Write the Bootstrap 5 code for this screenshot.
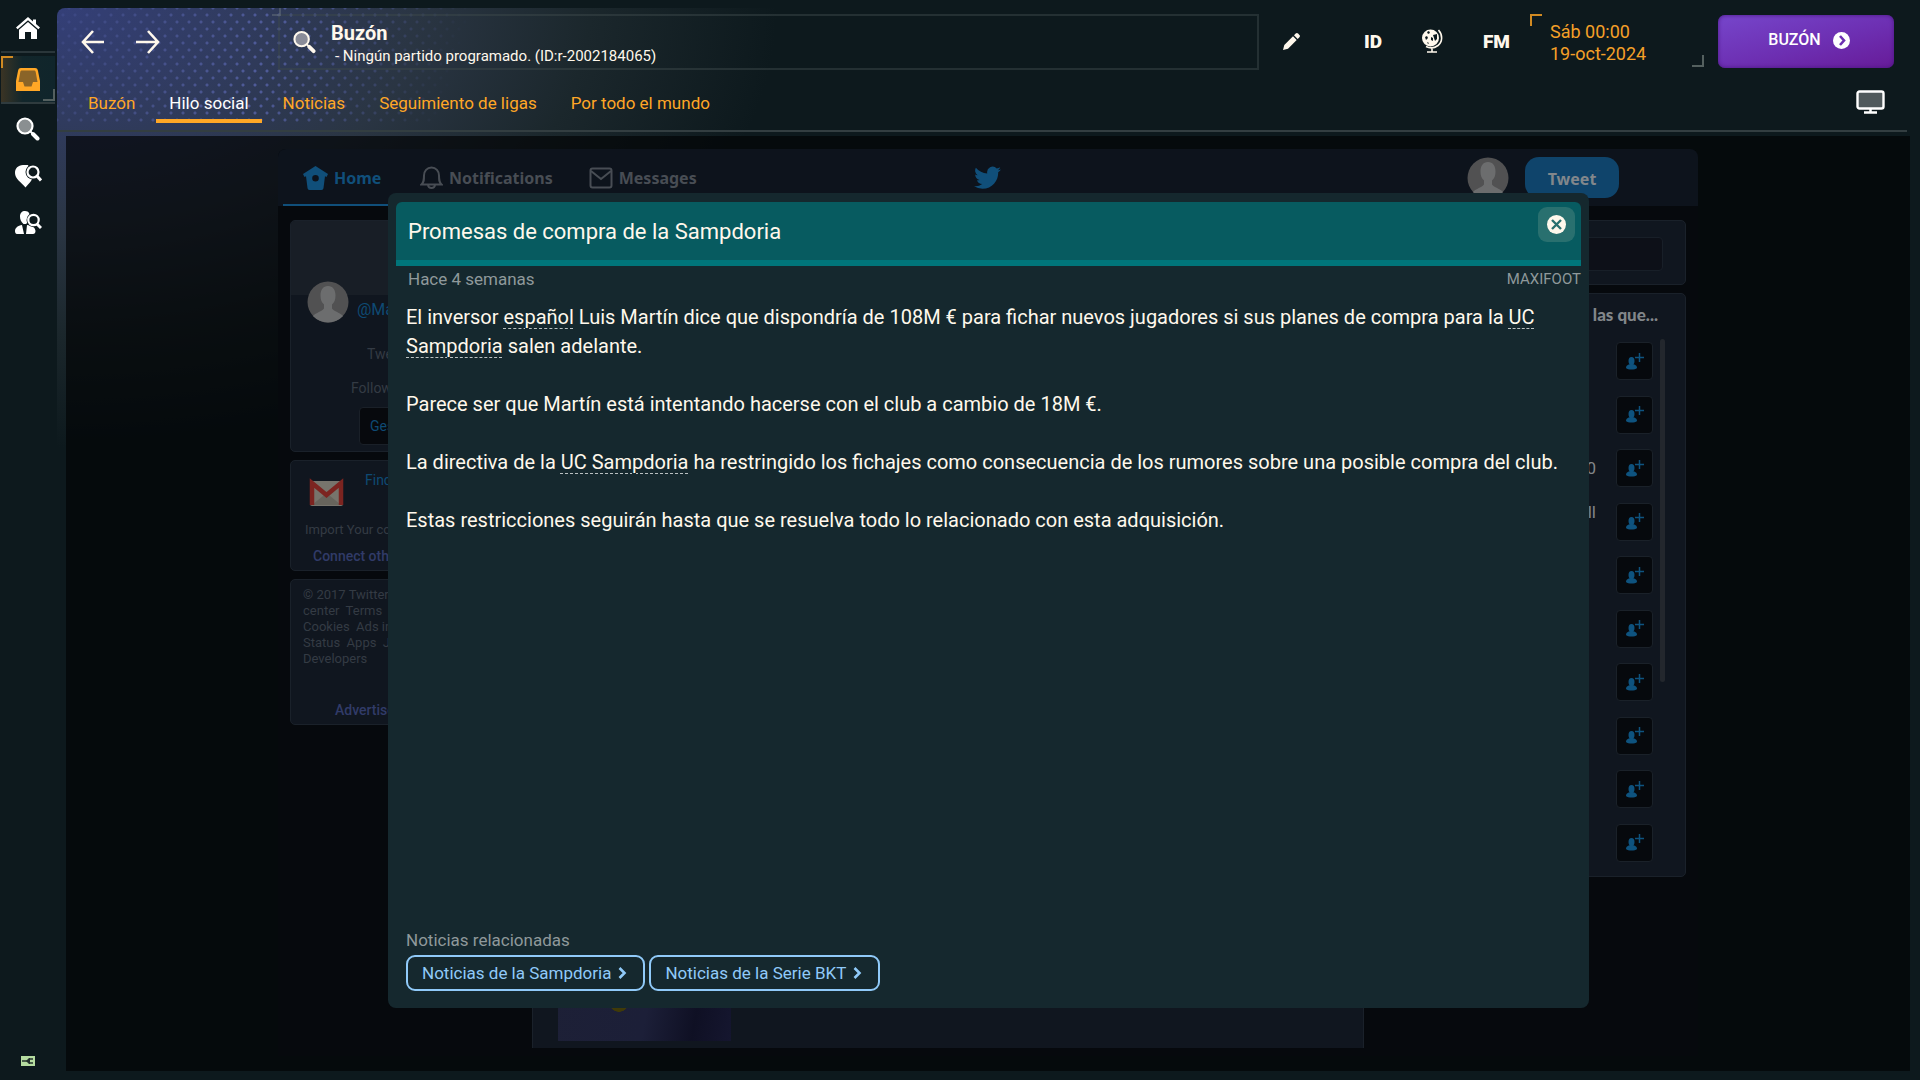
<!DOCTYPE html>
<html lang="es">
<head>
<meta charset="utf-8">
<meta name="viewport" content="width=device-width, initial-scale=1">
<title>Buzón</title>
<link href="https://cdn.jsdelivr.net/npm/bootstrap@5.3.0/dist/css/bootstrap.min.css" rel="stylesheet">
<style>
  body { background: #0d191d; color: #fff8ec; font-family: Roboto, "Liberation Sans", sans-serif; font-size: 18px; line-height: 22px; }
  a { text-decoration: none; }
  svg { display: block; flex: none; }

  /* icon rail */
  .rail { width: 57px; flex: none; padding: 5px 2px 13px 1px; }
  .rail a { display: flex; align-items: center; justify-content: center; height: 47px; width: 100%; color: #fff; }
  .rail .rail-home { border-bottom: 2px solid #2a363a; height: 48px; }
  .rail .rail-on { position: relative; margin: 3px 0 1px; height: 48px; color: #ffa726; border-bottom: 2px solid #2f3b3e; background: linear-gradient(90deg, #3b3424, #12262b 40%, #10252b); }
  .bracket::before, .bracket::after { content: ""; position: absolute; width: 12px; height: 12px; }
  .bracket::before { left: 0; top: 0; border-left: 2px solid #d18a22; border-top: 2px solid #d18a22; }
  .bracket::after { right: 0; bottom: 1px; border-right: 2px solid #54605f; border-bottom: 2px solid #54605f; }

  /* frame */
  .stage { margin-top: 8px; border-top-left-radius: 8px; position: relative; min-width: 0;
    background: radial-gradient(ellipse 720px 440px at 0 0, #343f78 0, #303b5e 26%, #2a3543 50%, #1b272c 74%, rgba(13,25,29,0) 100%); }
  .stage::before { content: ""; position: absolute; left: 0; top: 0; width: 460px; height: 116px; border-top-left-radius: 8px;
    background-image: radial-gradient(circle, #5b67b0 1px, transparent 2px), radial-gradient(circle, #5b67b0 1px, transparent 2px);
    background-size: 12px 14px; background-position: 0 0, 6px 7px; opacity: .75;
    -webkit-mask-image: linear-gradient(105deg, rgba(0,0,0,.25), #000 45%, transparent 85%); mask-image: linear-gradient(105deg, rgba(0,0,0,.25), #000 45%, transparent 85%); }
  .topbar { position: relative; height: 124px; border-bottom: 2px solid #333e41; margin-right: 13px; padding-top: 6px; }
  .icon-btn { background: none; border: 0; padding: 0; color: #fff8ec; display: flex; align-items: center; justify-content: center; }
  .where { position: relative; height: 56px; margin-left: 118px; border: 2px solid #3c474a80; padding: 4px 12px 0; gap: 15px; flex: 0 1 981px; }
  .where svg { margin: 0 0 4px 1px; }
  .where::before { content: ""; position: absolute; left: -8px; top: -8px; width: 9px; height: 8px; border: 1px solid #68727c80; border-width: 0 2px 2px 0; }
  .where-title { font-size: 20px; font-weight: 700; line-height: 24px; }
  .where-sub { font-size: 15px; line-height: 22px; padding-left: 4px; }
  .tools { margin-right: 13px; }
  .short { font-weight: 900; font-size: 19px; padding-top: 2px; }
  .clock { position: relative; width: 174px; height: 54px; color: #f5a028; padding: 7px 20px 0; }
  .go { width: 176px; height: 53px; margin-left: 14px; padding: 0 0 2px 6px; border: 0; border-radius: 7px; color: #fff; font-size: 16px; font-weight: 500; background: linear-gradient(165deg, #7646cb, #6d2fb2 55%, #671b98); box-shadow: inset 0 0 4px #4a1580; }
  .tabs-row { padding: 20px 22px 0 18px; }
  .tabs-row a { color: #ffa726; padding: 2px 13px 0; height: 33px; font-size: 17px; border-bottom: 4px solid transparent; white-space: nowrap; }
  .tabs-row a.on { color: #fff; border-color: #ffa726; }
  .tabs-row button { height: 24px; }

  /* dimmed social page */
  .scene { position: relative; margin: 4px 10px 9px 9px; background: rgba(1,3,4,.68); }
  .feed { width: 1420px; max-width: 100%; margin-top: 13px; margin-bottom: 15px; background: #06090d; border-radius: 8px 8px 0 0; }
  .feed-nav { height: 57px; background: #0d131c; border-radius: 8px 8px 0 0; padding: 0 79px 0 5px; font-family: "Noto Sans", sans-serif; font-weight: 700; font-size: 16px; }
  .feed-nav a { color: #484d54; display: flex; align-items: center; gap: 6px; height: 57px; }
  .feed-nav a.on { color: #104f7a; width: 117px; padding-left: 20px; border-bottom: 2px solid #104f7a; padding-top: 2px; }
  .bird { position: absolute; left: 50%; top: 17px; margin-left: -14px; }
  .tweet { width: 94px; height: 41px; border: 0; border-radius: 14px; background: #0f446b; color: #82878b; font-weight: 700; font-size: 16px; padding: 2px 0 0; }
  .cols { padding: 14px 12px 0; }
  .panel { background: #10161f; border: 1px solid #1a212a; border-radius: 5px; overflow: hidden; color: #343b44; font-size: 14px; }
  .side-l { width: 230px; flex: none; }
  .side-r { width: 310px; flex: none; }
  .profile { height: 232px; }
  .cover { height: 74px; background: #181e26; }
  .face-up { margin-top: -14px; }
  .blue { color: #0e4a73; }
  .violet { color: #313b68; }
  .manage { width: 130px; height: 38px; border: 1px solid #1a2028; border-radius: 4px; background: #07090d; color: #0e4a73; padding: 0 10px; text-align: left; }
  .import { height: 111px; padding: 8px 14px; }
  .import-note { font-size: 13px; padding-top: 8px; }
  .legal-box { height: 146px; padding: 7px 8px; }
  .legal { font-size: 13px; line-height: 16px; white-space: pre; }
  .mid { border-width: 0 1px; border-radius: 0; padding: 0 25px 7px; margin-bottom: 8px; }
  .thumb { width: 173px; height: 150px; background: radial-gradient(circle 10px at 61px 111px, #403a08 95%, transparent), linear-gradient(100deg, #1d2036, #1c1f38 55%, #0f1024 80%, #15162f); }
  .find-panel { height: 65px; }
  .find-box { width: 270px; height: 34px; background: #0d1018; border: 1px solid #181f28; border-radius: 4px; }
  .who { height: 584px; }
  .who h2 { font-family: Lato, sans-serif; font-weight: 900; font-size: 17px; line-height: 20px; color: #82868a; padding: 11px 11px 14px 0; margin: 0; }
  .who-row { gap: 7px; }
  .follow-list { height: 520px; margin-top: 3px; color: #82868a; font-size: 17px; line-height: 19px; }
  .team { padding-right: 20px; }
  .follow { width: 37px; height: 38px; flex: none; border: 1px solid #1a2129; border-radius: 4px; background: #06090d; color: #0e537f; display: flex; align-items: center; justify-content: center; padding: 0; }
  .thumbbar { width: 5px; height: 343px; border-radius: 3px; background: #23272d; }

  /* news dialog */
  .news { position: absolute; top: 57px; left: 50%; margin-left: -600px; width: 1201px; height: 815px; background: #15282e; border-radius: 8px; padding: 9px 8px 17px; }
  .news-head { height: 64px; background: #075b60; border-bottom: 6px solid #00757a; border-radius: 6px 6px 0 0; padding: 5px 6px 0 12px; }
  .news-head h1 { font-size: 22px; line-height: 50px; font-weight: 400; margin: 0; color: #fff8ec; }
  .close-x { width: 37px; height: 35px; border: 0; border-radius: 9px; background: #29706f; padding: 0; color: #fff8ec; display: flex; align-items: center; justify-content: center; }
  .dim { color: #8f999b; font-size: 17px; }
  .stamp { padding: 2px 0 0 12px; }
  .source { font-size: 15px; }
  .story { font-size: 20px; line-height: 29px; padding: 13px 16px 0 10px; }
  .story p { margin: 0 0 29px; }
  .story a { color: inherit; text-decoration: underline dashed 1px #b9c0c1; text-underline-offset: 4px; }
  .related { padding-left: 10px; }
  .more { height: 36px; border: 2px solid #90caf9; border-radius: 9px; color: #90caf9; font-size: 17px; background: transparent; padding: 0 16px 0 14px; gap: 7px; display: flex; align-items: center; white-space: nowrap; }
</style>
</head>
<body>
<div class="d-flex min-vh-100">
  <nav class="rail d-flex flex-column" aria-label="Principal">
    <a class="rail-home" href="#" aria-label="Inicio"><svg width="24" height="22" viewBox="0 0 24 22" fill="currentColor"><path d="M12 0 0 10.500l1.600 1.700L12 3.200l10.400 9L24 10.500l-4-3.500V2.500h-3v2z"/><path d="M12 5 3 12.800V22h6v-7h6v7h6v-9.200z"/></svg></a>
    <a class="rail-on bracket" href="#" aria-label="Buzón"><svg width="24" height="23" viewBox="0 0 24 23"><path fill="#ffa726" d="M5 0h14c2 0 2.600 1 3 3l2 10v10H0V13L2 3c.4-2 1-3 3-3z"/><path fill="#8a6428" d="M6 2.500h12c1 0 1.500.5 1.700 1.500L21.500 14H17l-1.500 4.500h-7L7 14H2.500L4.300 4C4.500 3 5 2.500 6 2.500z"/></svg></a>
    <a href="#" aria-label="Buscar"><svg width="24" height="24" viewBox="0 0 24 24"><circle cx="9" cy="9" r="7.500" fill="#8a8f91" stroke="#fff" stroke-width="2.200"/><path d="m14.500 14.500 2 2" stroke="#fff" stroke-width="2"/><path d="m17 17 4.500 4.500" stroke="#fff" stroke-width="4" stroke-linecap="round"/></svg></a>
    <a href="#" aria-label="Ojeo"><svg width="27" height="24" viewBox="0 0 27 24"><path fill="#fff" d="M8 1C3 1.500 0 4 0 9c0 6 6 9 10.500 14.500C14 19 17.500 17 17.500 12L13 1z"/><circle cx="18" cy="8" r="7.500" fill="#0d191d"/><circle cx="18" cy="8" r="5.500" fill="none" stroke="#fff" stroke-width="2.200"/><path d="m22 12 4 4.500" stroke="#fff" stroke-width="3"/></svg></a>
    <a href="#" aria-label="Personal"><svg width="27" height="24" viewBox="0 0 27 24"><path fill="#fff" d="M10 0c4 0 5 3 4.600 6-.3 3-1.600 5.500-3.600 7H8.500C6 11 5 8 5 5.500 5 2 7 0 10 0zM0 20c0-3 3-5.500 7-6l2 9H2c-1.500 0-2-1.500-2-3zM12 14c5 0 8.500 3 8.500 6 0 2-1 3-2.500 3h-7z"/><circle cx="18.500" cy="9" r="7" fill="#0d191d"/><circle cx="18.500" cy="9" r="5.200" fill="none" stroke="#fff" stroke-width="2.200"/><path d="m22 13 4 4" stroke="#fff" stroke-width="3"/></svg></a>
    <span class="mt-auto d-flex justify-content-center"><svg width="16" height="12" viewBox="0 0 16 12"><path fill="#b5dca0" d="M1 1h14v10H1z"/><path d="M2 6h6M9 4h4M9 8h4" fill="none" stroke="#23302c" stroke-width="1.500"/><path d="M6 6l3-3h1v6H9z" fill="#23302c"/></svg></span>
  </nav>

  <main class="stage flex-grow-1 d-flex flex-column">
    <header class="topbar">
      <div class="d-flex align-items-start">
        <div class="d-flex pt-3 gap-4 ps-4">
          <button class="icon-btn" aria-label="Atrás"><svg width="23" height="24" viewBox="0 0 23 24" fill="none" stroke="currentColor" stroke-width="2.600"><path d="M12 1 2 12l10 11M2 12h21"/></svg></button>
          <button class="icon-btn ms-2" aria-label="Adelante"><svg width="24" height="24" viewBox="0 0 24 24" fill="none" stroke="currentColor" stroke-width="2.600"><path d="m12 1 10 11-10 11M22 12H0"/></svg></button>
        </div>
        <div class="where d-flex align-items-center">
          <svg width="23" height="24" viewBox="0 0 24 24"><circle cx="9" cy="9" r="7.500" fill="#8a8c98" stroke="#fff8ec" stroke-width="2.200"/><path d="m14.500 14.500 2 2" stroke="#fff8ec" stroke-width="2"/><path d="m17 17 4.500 4.500" stroke="#fff8ec" stroke-width="4" stroke-linecap="round"/></svg>
          <div>
            <div class="where-title">Buzón</div>
            <div class="where-sub">- Ningún partido programado. (ID:r-2002184065)</div>
          </div>
        </div>
        <div class="tools d-flex align-items-center ms-auto">
          <button class="icon-btn me-5" aria-label="Editar"><svg class="me-3" width="17" height="17" viewBox="0 0 17 17" fill="currentColor"><path d="M0 17l1.300-5L10 3.300 13.700 7 5 15.700zM11 2.300 12.700.6c.8-.8 1.600-.8 2.400 0l1.300 1.300c.8.8.8 1.600 0 2.400L14.700 6z"/></svg></button>
          <button class="icon-btn short me-4">ID</button>
          <button class="icon-btn ms-3 me-4" aria-label="Mundo"><svg width="21" height="24" viewBox="0 0 21 24"><circle cx="8.500" cy="9" r="8.500" fill="#fff8ec"/><path d="M5 3l2-1 1 2-2 1zM3 8l2-1 1 2-2 2zM9 8l2 1v3l-2-1zM11 6l4-1v5l-2 2-1-3zM5 13l2 1-1 1z" fill="#0d191d"/><path d="M16.500 1c4.500 5 4 12-.5 15.500-3.500 2.500-8 3-12 1M10 19v4M5 23h10" fill="none" stroke="#fff8ec" stroke-width="1.600"/></svg></button>
          <button class="icon-btn short ms-3 me-3 pe-1">FM</button>
          <div class="clock bracket">Sáb 00:00<br>19-oct-2024</div>
          <button class="go d-flex align-items-center justify-content-center gap-2">BUZÓN <svg class="ms-1" width="17" height="17" viewBox="0 0 17 17"><circle cx="8.500" cy="8.500" r="8.500" fill="#fff"/><path d="m7 4 4 4.500L7 13" fill="none" stroke="#6d2fb2" stroke-width="2.600"/></svg></button>
        </div>
      </div>
      <nav class="tabs-row d-flex gap-2" aria-label="Secciones">
        <a href="#">Buzón</a>
        <a class="on" href="#">Hilo social</a>
        <a href="#">Noticias</a>
        <a href="#">Seguimiento de ligas</a>
        <a href="#">Por todo el mundo</a>
        <button class="icon-btn ms-auto" aria-label="Vista"><svg width="29" height="24" viewBox="0 0 29 24"><rect x="1.500" y="1.500" width="26" height="17" rx="2" fill="#50595c" stroke="#fff" stroke-width="2.400"/><path d="M14.500 19v3M8 22.500h13" stroke="#fff" stroke-width="2.500"/></svg></button>
      </nav>
    </header>

    <section class="scene flex-grow-1 d-flex justify-content-center">
      <div class="feed d-flex flex-column">
        <div class="feed-nav position-relative d-flex align-items-center">
          <a class="on" href="#"><svg width="25" height="24" viewBox="0 0 25 24"><path fill="currentColor" fill-rule="evenodd" d="M12.500 0 25 8l-1.500 3-1.500-.7L20.500 22c-.2 1.300-.8 2-2 2H6.500c-1.200 0-1.800-.7-2-2L3 10.300 1.500 11 0 8zm0 9a3.300 3.300 0 1 0 0 6.600 3.300 3.300 0 0 0 0-6.600z"/></svg>Home</a>
          <a class="ms-3 ps-1" href="#"><svg width="23" height="24" viewBox="0 0 23 24" fill="none" stroke="currentColor" stroke-width="2"><path d="M1.500 18.500C4 16 4 14 4 9.500 4 5 7 1.500 11.500 1.500S19 5 19 9.500c0 4.500 0 6.500 2.500 9zM8 19c.5 4 6.500 4 7 0"/></svg>Notifications</a>
          <a class="ms-4 ps-2" href="#"><svg class="ms-1" width="24" height="22" viewBox="0 0 24 22" fill="none" stroke="currentColor" stroke-width="2"><rect x="1.500" y="1.500" width="21" height="19" rx="2"/><path d="m2 4 10 8 10-8"/></svg>Messages</a>
          <svg class="bird" width="27" height="24" viewBox="0 0 24 20" fill="#104f7a"><path d="M24 2.400a9.800 9.800 0 0 1-2.800.8A5 5 0 0 0 23.300.4a10 10 0 0 1-3.100 1.200A4.900 4.900 0 0 0 11.800 6 14 14 0 0 1 1.700.9a4.900 4.900 0 0 0 1.500 6.600A4.900 4.900 0 0 1 1 6.900c0 2.300 1.600 4.400 3.900 4.900a5 5 0 0 1-2.200.1 4.900 4.900 0 0 0 4.600 3.400A9.900 9.900 0 0 1 0 17.300a14 14 0 0 0 7.500 2.200c9.100 0 14.300-7.700 14-14.600A10 10 0 0 0 24 2.400z"/></svg>
          <div class="d-flex ms-auto gap-3 align-items-center">
            <svg width="42" height="42" viewBox="0 0 42 42"><circle cx="21" cy="21" r="20.500" fill="#515152"/><path fill="#6c6d6e" d="M21 5c5 0 7.500 4 7.500 9.500 0 4-1 7-3.500 9v4c2 3 8 4 11 7.500a20.500 20.500 0 0 1-30 0c3-3.500 9-4.500 11-7.500v-4c-2.500-2-3.500-5-3.500-9C13.500 9 16 5 21 5z"/></svg>
            <button class="tweet">Tweet</button>
          </div>
        </div>
        <div class="cols d-flex flex-grow-1 gap-2">
          <div class="side-l d-flex flex-column gap-2 me-1">
            <div class="panel profile">
              <div class="cover"></div>
              <div class="d-flex align-items-start px-3 gap-2">
                <svg class="face-up" width="42" height="42" viewBox="0 0 42 42"><circle cx="21" cy="21" r="20.500" fill="#515152"/><path fill="#6c6d6e" d="M21 5c5 0 7.500 4 7.500 9.500 0 4-1 7-3.500 9v4c2 3 8 4 11 7.500a20.500 20.500 0 0 1-30 0c3-3.500 9-4.500 11-7.500v-4c-2.500-2-3.500-5-3.500-9C13.500 9 16 5 21 5z"/></svg>
                <a class="blue fs-6 pt-1" href="#">@Maxi</a>
              </div>
              <div class="ps-5 pt-3"><div class="ps-4 ms-1 pt-1">Tweets</div></div>
              <div class="ps-5 pt-2"><div class="ps-1 ms-2 pt-1">Following</div></div>
              <div class="ps-5 pt-1 ms-3"><button class="manage ms-1 mt-1">Gestionar</button></div>
            </div>
            <div class="panel import">
              <div class="d-flex gap-3">
                <svg class="mt-2 ms-1 me-1" width="36" height="34" viewBox="0 0 36 30"><rect x="1" y="2" width="33" height="25" rx="2" fill="#77746c"/><path d="M3 26 17.500 14 32 26z" fill="#67645c"/><path d="M3 26V4l14.500 12L32 4v22" fill="none" stroke="#7c2420" stroke-width="4.500"/></svg>
                <a class="blue" href="#">Find</a>
              </div>
              <div class="import-note">Import Your contacts</div>
              <a class="violet ps-2 fw-medium d-block pt-1" href="#">Connect other</a>
            </div>
            <div class="panel legal-box"><div class="legal ps-1">© 2017 Twitter
center  Terms
Cookies  Ads info
Status  Apps  Jobs
Developers</div>
              <div class="pt-4 ps-4 ms-2"><a class="violet ps-1 mt-2 d-inline-block fw-medium" href="#">Advertise</a></div>
            </div>
          </div>
          <div class="panel mid flex-grow-1 d-flex flex-column"><div class="thumb mt-auto"></div></div>
          <div class="side-r ms-1 d-flex flex-column gap-2">
            <div class="panel find-panel pt-3 px-3"><input class="find-box" type="text" aria-label="Buscar en Twitter"></div>
            <div class="panel who px-3">
              <h2 class="text-end">a las que...</h2>
              <div class="who-row d-flex">
                <div class="follow-list flex-grow-1 d-flex flex-column justify-content-between" id="follows"></div>
                <div class="thumbbar me-1"></div>
              </div>
            </div>
          </div>
        </div>
      </div>

      <article class="news d-flex flex-column" role="dialog" aria-labelledby="news-title">
        <div class="news-head d-flex justify-content-between align-items-start">
          <h1 id="news-title">Promesas de compra de la Sampdoria</h1>
          <button class="close-x" aria-label="Cerrar"><svg width="19" height="19" viewBox="0 0 19 19"><circle cx="9.500" cy="9.500" r="9.500" fill="currentColor"/><path d="m5 5 9 9M14 5l-9 9" stroke="#29706f" stroke-width="2.400"/></svg></button>
        </div>
        <div class="dim stamp d-flex justify-content-between"><span>Hace 4 semanas</span><span class="source">MAXIFOOT</span></div>
        <div class="story flex-grow-1">
          <p>El inversor <a href="#">español</a> Luis Martín dice que dispondría de 108M € para fichar nuevos jugadores si sus planes de compra para la <a href="#">UC</a> <a href="#">Sampdoria</a> salen adelante.</p>
          <p>Parece ser que Martín está intentando hacerse con el club a cambio de 18M €.</p>
          <p>La directiva de la <a href="#">UC Sampdoria</a> ha restringido los fichajes como consecuencia de los rumores sobre una posible compra del club.</p>
          <p>Estas restricciones seguirán hasta que se resuelva todo lo relacionado con esta adquisición.</p>
        </div>
        <div class="related">
          <div class="dim mb-1">Noticias relacionadas</div>
          <div class="d-flex gap-1">
            <button class="more">Noticias de la Sampdoria <svg width="9" height="12" viewBox="0 0 9 12" fill="none" stroke="currentColor" stroke-width="2.600"><path d="m1.500 1 5 5-5 5"/></svg></button>
            <button class="more">Noticias de la Serie BKT <svg width="9" height="12" viewBox="0 0 9 12" fill="none" stroke="currentColor" stroke-width="2.600"><path d="m1.500 1 5 5-5 5"/></svg></button>
          </div>
        </div>
      </article>
    </section>
  </main>
</div>
<script src="https://cdn.jsdelivr.net/npm/bootstrap@5.3.0/dist/js/bootstrap.bundle.min.js"></script>
<script>
  const names = ["", "", "1910", "Football", "", "", "", "", "", ""];
  const icon = '<svg width="18" height="17" viewBox="0 0 18 17"><ellipse cx="5.500" cy="8" rx="3" ry="4" fill="currentColor"/><path d="M0 15c0-3 3-4 5.500-4s5.500 1 5.500 4c-2 2-9 2-11 0z" fill="currentColor"/><path d="M13.500 0v9M9 4.500h9" stroke="currentColor" stroke-width="1.500"/></svg>';
  document.getElementById("follows").innerHTML = names.map(n =>
    `<div class="d-flex justify-content-between ${n === "Football" ? "" : "align-items-center"}"><span class="team flex-grow-1 text-end">${n}</span><button class="follow" aria-label="Seguir">${icon}</button></div>`).join("");
</script>
</body>
</html>
